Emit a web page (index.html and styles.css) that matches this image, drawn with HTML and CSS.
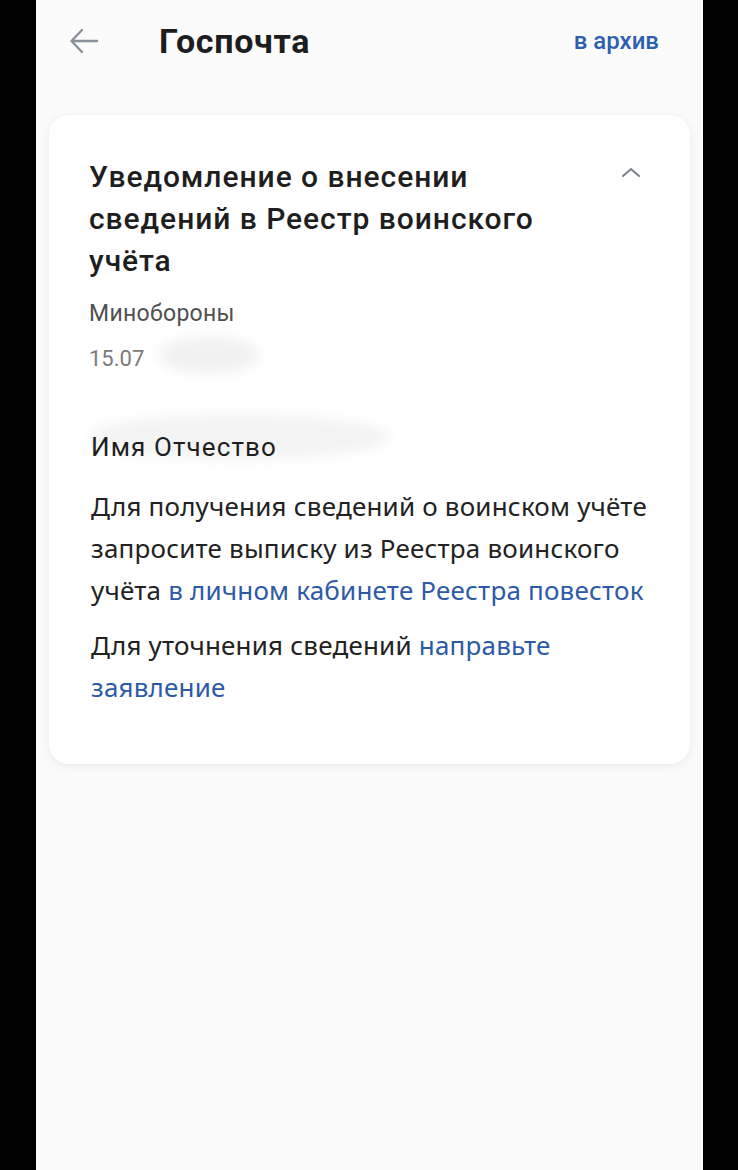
FILE: index.html
```html
<!DOCTYPE html>
<html lang="ru">
<head>
<meta charset="utf-8">
<link rel="stylesheet" href="styles.css">
</head>
<body>
<div class="screen">
  <header class="topbar">
    <svg class="back" width="30" height="26" viewBox="0 0 30 26"><path d="M13 2 L2.5 13 L13 24 M2.5 13 H28" fill="none" stroke="#8a909a" stroke-width="2.4" stroke-linecap="round" stroke-linejoin="round"/></svg>
    <h1 class="title">Госпочта</h1>
    <a class="archive">в архив</a>
  </header>
  <section class="card">
    <div class="card-head">
      <h2 class="subject">Уведомление о внесении сведений в Реестр воинского учёта</h2>
      <svg class="chevron" width="20" height="12" viewBox="0 0 20 12"><path d="M2 10 L10 3 L18 10" fill="none" stroke="#7a7f88" stroke-width="2" stroke-linecap="round" stroke-linejoin="round"/></svg>
    </div>
    <div class="sender">Минобороны</div>
    <div class="date">15.07<span class="blur blur-date"></span></div>
    <div class="body">
      <span class="blur blur-name"></span>
      <p class="name">Имя Отчество</p>
      <p class="text">Для получения сведений о воинском учёте запросите выписку из Реестра воинского учёта <a class="link">в личном кабинете Реестра повесток</a></p>
      <p class="text">Для уточнения сведений <a class="link">направьте заявление</a></p>
    </div>
  </section>
</div>
</body>
</html>
```

FILE: styles.css
```css
html, body {
  margin: 0;
  padding: 0;
  background: #000;
}
body {
  font-family: Roboto, "Noto Sans", sans-serif;
}
.screen {
  width: 667px;
  height: 1170px;
  margin-left: 36px;
  background: #fbfbfb;
  overflow: hidden;
}
.topbar {
  display: flex;
  align-items: center;
  height: 82px;
  padding: 0 44px 0 33px;
}
.back {
  flex: none;
}
.title {
  margin: 0 0 0 60px;
  font-size: 34px;
  font-weight: 700;
  color: #1d1d1f;
  letter-spacing: 0.7px;
  flex: 1;
}
.archive {
  font-size: 24px;
  color: #2d5fb0;
  font-weight: 500;
}
.card {
  margin: 33px 13px 0 13px;
  background: #fff;
  border-radius: 20px;
  box-shadow: 0 2px 10px rgba(0, 0, 0, 0.07);
  padding: 41px 40px 56px 40px;
}
.card-head {
  display: flex;
  align-items: flex-start;
  justify-content: space-between;
  gap: 20px;
}
.subject {
  margin: 0;
  max-width: 485px;
  font-size: 30px;
  line-height: 42px;
  font-weight: 500;
  color: #1e1e1e;
  letter-spacing: 0.95px;
}
.chevron {
  margin: 10px 9px 0 0;
  flex: none;
}
.sender {
  margin-top: 16px;
  font-size: 23px;
  line-height: 32px;
  color: #505050;
  letter-spacing: 0.3px;
}
.date {
  position: relative;
  margin-top: 13px;
  font-size: 22px;
  line-height: 32px;
  color: #7a7a7a;
}
.blur {
  position: absolute;
  border-radius: 50%;
  background: #f1f1f1;
  filter: blur(6px);
}
.blur-date {
  left: 70px;
  top: -6px;
  width: 100px;
  height: 36px;
}
.body {
  position: relative;
  margin-top: 54px;
}
.blur-name {
  left: 0;
  top: -14px;
  width: 300px;
  height: 44px;
  background: #f3f3f3;
}
.name {
  position: relative;
  margin: 0 0 0 2px;
  font-size: 26px;
  line-height: 36px;
  letter-spacing: 1.1px;
  color: #1e1e1e;
}
.text {
  margin: 20px 0 0 2px;
  font-family: "Noto Sans", "Open Sans", sans-serif;
  font-size: 26px;
  line-height: 42px;
  letter-spacing: 0.2px;
  color: #222;
}
.text + .text {
  margin-top: 13px;
}
.link {
  color: #2d5aa8;
}
```
